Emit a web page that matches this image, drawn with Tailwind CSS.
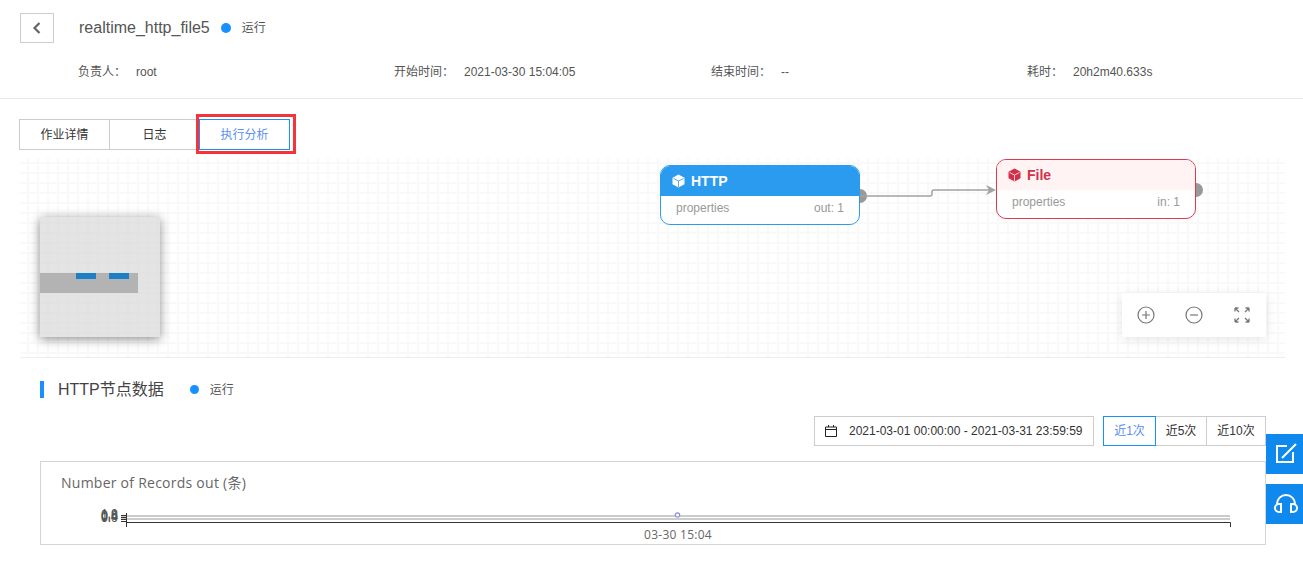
<!DOCTYPE html>
<html lang="zh-CN">

<head>
    <meta charset="UTF-8">
    <title>realtime_http_file5</title>
    <script src="https://cdn.jsdelivr.net/npm/@tailwindcss/browser@4"></script>
</head>

<body class="bg-white h-[568px] overflow-hidden relative text-[#333] font-['Liberation_Sans','Noto_Sans_CJK_SC',sans-serif]">
    <!-- header -->
    <header class="h-[99px] border-b border-[#e8e8e8]">
        <div class="flex items-center pt-[13px] pl-[20px] h-[43px]">
            <button class="w-[34px] h-[30px] border border-[#ccc] flex items-center justify-center">
                <svg width="10" height="14" viewBox="0 0 10 14" fill="none" stroke="#666" stroke-width="2.2"><path d="M7.5 2 L2.5 7 L7.5 12" /></svg>
            </button>
            <h1 class="ml-[25px] text-base text-[#555]">realtime_http_file5</h1>
            <span class="ml-[11px] w-[10px] h-[10px] rounded-full bg-[#1890ff]"></span>
            <span class="ml-[11px] text-xs text-[#555]">运行</span>
        </div>
        <div class="grid grid-cols-[316px_317px_316px_1fr] pl-[78px] mt-[21px] text-xs leading-4 text-[#555]">
            <div class="flex"><span class="w-[58px]">负责人：</span><span>root</span></div>
            <div class="flex"><span class="w-[70px]">开始时间：</span><span>2021-03-30 15:04:05</span></div>
            <div class="flex"><span class="w-[70px]">结束时间：</span><span>--</span></div>
            <div class="flex"><span class="w-[46px]">耗时：</span><span>20h2m40.633s</span></div>
        </div>
    </header>

    <!-- tabs -->
    <div class="relative flex ml-[19px] mt-[20px] w-[271px] h-[31px] text-xs text-[#333]">
        <div class="w-[91px] border border-[#ccc] flex items-center justify-center">作业详情</div>
        <div class="w-[90px] border-y border-r border-[#ccc] flex items-center justify-center">日志</div>
        <div class="w-[91px] border border-[#1890ff] text-[#5b8ff0] flex items-center justify-center -ml-px">执行分析</div>
        <div class="absolute left-[177px] -top-[5px] w-[100px] h-[40px] border-[3px] border-[#f5333a]"></div>
    </div>

    <!-- flow canvas -->
    <section class="relative ml-[20px] mt-[8px] w-[1265px] h-[200px] border-b border-[#eee] bg-[linear-gradient(#f9f9f9_2px,transparent_2px),linear-gradient(90deg,#f9f9f9_2px,transparent_2px)] bg-[length:10px_10px] bg-[position:7px_4px]">
        <svg class="absolute left-[820px] top-[10px]" width="170" height="50" fill="none">
            <circle cx="20" cy="28" r="7" fill="#999" />
            <path d="M20 28 H90 Q92 28 92 26 V24 Q92 22 94 22 H150" stroke="#a3a3a3" stroke-width="1.5" />
            <path d="M146 17 L156 22 L146 27 L149 22 Z" fill="#a3a3a3" />
        </svg>
        <svg class="absolute left-[1166px] top-[22px]" width="20" height="20"><circle cx="10" cy="10" r="7" fill="#999" /></svg>

        <!-- HTTP node -->
        <div class="absolute left-[640px] top-[7px] w-[200px] h-[60px] rounded-[10px] border border-[#2a9bef] bg-white overflow-hidden">
            <div class="h-[30px] bg-[#2a9bef] flex items-center pl-[11px] text-white text-sm font-bold">
                <svg width="13" height="14" viewBox="0 0 13 14"><path d="M6.5 0.5 L12.5 3.7 V10.3 L6.5 13.5 L0.5 10.3 V3.7 Z" fill="#fff" /><path d="M1.5 4.5 L6.5 7 L11.5 4.5 M6.5 7 V13" stroke="#2a9bef" stroke-width="0.8" fill="none" /></svg>
                <span class="ml-[6px]">HTTP</span>
            </div>
            <div class="flex justify-between px-[15px] pt-[4px] text-xs leading-4 text-[#999]"><span>properties</span><span>out: 1</span></div>
        </div>

        <!-- File node -->
        <div class="absolute left-[976px] top-[1px] w-[200px] h-[60px] rounded-[10px] border border-[#dc3a50] bg-white overflow-hidden">
            <div class="h-[30px] bg-[#fff3f4] flex items-center pl-[11px] text-[#d2304a] text-sm font-bold">
                <svg width="13" height="14" viewBox="0 0 13 14"><path d="M6.5 0.5 L12.5 3.7 V10.3 L6.5 13.5 L0.5 10.3 V3.7 Z" fill="#d2304a" /><path d="M1.5 4.5 L6.5 7 L11.5 4.5 M6.5 7 V13" stroke="#fff3f4" stroke-width="0.8" fill="none" /></svg>
                <span class="ml-[6px]">File</span>
            </div>
            <div class="flex justify-between px-[15px] pt-[4px] text-xs leading-4 text-[#999]"><span>properties</span><span>in: 1</span></div>
        </div>

        <!-- minimap -->
        <div class="absolute left-[20px] top-[59px] w-[120px] h-[120px] bg-[#d8d8d8]/70 shadow-[0_2px_10px_rgba(0,0,0,0.45)]">
            <div class="absolute left-0 top-[56px] w-[98px] h-[20px] bg-[#b3b3b3]"></div>
            <div class="absolute left-[36px] top-[56px] w-[20px] h-[6px] bg-[#1e7fc9]"></div>
            <div class="absolute left-[69px] top-[56px] w-[20px] h-[6px] bg-[#1e7fc9]"></div>
        </div>

        <!-- zoom controls -->
        <div class="absolute left-[1102px] top-[135px] w-[144px] h-[44px] bg-white shadow-[0_2px_10px_rgba(0,0,0,0.1)] flex items-center justify-between px-[15px]">
            <svg width="18" height="18" viewBox="0 0 18 18" fill="none" stroke="#777" stroke-width="1.2"><circle cx="9" cy="9" r="8" /><path d="M9 5 V13 M5 9 H13" /></svg>
            <svg width="18" height="18" viewBox="0 0 18 18" fill="none" stroke="#777" stroke-width="1.2"><circle cx="9" cy="9" r="8" /><path d="M5 9 H13" /></svg>
            <svg width="18" height="18" viewBox="0 0 18 18" fill="none" stroke="#777" stroke-width="1.3"><path d="M2 2 L6 6 M2 2 H5.5 M2 2 V5.5 M16 2 L12 6 M16 2 H12.5 M16 2 V5.5 M2 16 L6 12 M2 16 H5.5 M2 16 V12.5 M16 16 L12 12 M16 16 H12.5 M16 16 V12.5" /></svg>
        </div>
    </section>

    <!-- node data -->
    <div class="flex items-center ml-[40px] mt-[23px] h-[17px]">
        <span class="w-[4px] h-[17px] bg-[#1890ff]"></span>
        <h2 class="ml-[14px] text-base text-[#444]">HTTP节点数据</h2>
        <span class="ml-[26px] w-[9px] h-[9px] rounded-full bg-[#1890ff]"></span>
        <span class="ml-[11px] text-xs text-[#555]">运行</span>
    </div>

    <div class="flex justify-end mr-[37px] mt-[18px] h-[30px] text-xs text-[#333]">
        <div class="w-[280px] border border-[#ccc] flex items-center pl-[9px]">
            <svg width="14" height="14" viewBox="0 0 14 14" fill="none" stroke="#222" stroke-width="1"><path d="M1.5 3 H12.5 V12.5 H1.5 Z M1.5 5.5 H12.5 M4.5 1 V3 M9.5 1 V3" /></svg>
            <span class="ml-[11px]">2021-03-01 00:00:00 - 2021-03-31 23:59:59</span>
        </div>
        <div class="ml-[9px] w-[53px] border border-[#1890ff] text-[#5b8ff0] flex items-center justify-center">近1次</div>
        <div class="w-[51px] border-y border-r border-[#ccc] flex items-center justify-center">近5次</div>
        <div class="w-[59px] border-y border-r border-[#ccc] flex items-center justify-center">近10次</div>
    </div>

    <!-- chart -->
    <div class="relative ml-[40px] mt-[15px] w-[1226px] h-[84px] border border-[#d5d5d5] font-['Open_Sans','Noto_Sans_CJK_SC',sans-serif]">
        <div class="pl-[20px] pt-[11px] text-sm leading-5 tracking-[0.25px] text-[#666]">Number of Records out (条)</div>
        <svg class="absolute left-0 top-0" width="1224" height="82" fill="none">
            <path d="M80 54 H1189 M80 57 H1189" stroke="#ccc" stroke-width="2" />
            <path d="M80 53.5 H85 M80 55.5 H85 M80 57.5 H85 M80 59.5 H85" stroke="#333" />
            <path d="M85 60.5 H1189.5 V65 M85.5 51 V65" stroke="#333" />
            <circle cx="636.5" cy="53" r="2.2" fill="#fff" stroke="#8f8fdc" stroke-width="1.2" />
            <text x="60" y="56" font-size="12" fill="#555">1.0</text>
            <text x="60" y="57" font-size="12" fill="#555">0.8</text>
            <text x="60" y="58" font-size="12" fill="#555">0.6</text>
            <text x="60" y="59" font-size="12" fill="#555">0.4</text>
            <text x="60" y="60" font-size="12" fill="#555">0.0</text>
            <text x="603" y="77" font-size="12" letter-spacing="0.27" fill="#666">03-30 15:04</text>
        </svg>
    </div>

    <!-- side buttons -->
    <div class="absolute right-0 top-[434px] w-[37px] flex flex-col gap-[10px]">
        <button class="h-[40px] bg-[#1089ee]">
            <svg width="37" height="40" viewBox="0 0 37 40" fill="none" stroke="#fff" stroke-width="2"><path d="M21 12 H11 V28 H27 V18 M30 10 L16 24" /></svg>
        </button>
        <button class="h-[40px] bg-[#1089ee]">
            <svg width="37" height="40" viewBox="0 0 37 40" fill="none" stroke="#fff" stroke-width="2"><path d="M11 21 V20 A9 9 0 0 1 29 20 V21 M15 20 V28 H13 A4 4 0 0 1 13 20 Z M25 20 V28 H27 A4 4 0 0 0 27 20 Z" /></svg>
        </button>
    </div>
</body>

</html>
